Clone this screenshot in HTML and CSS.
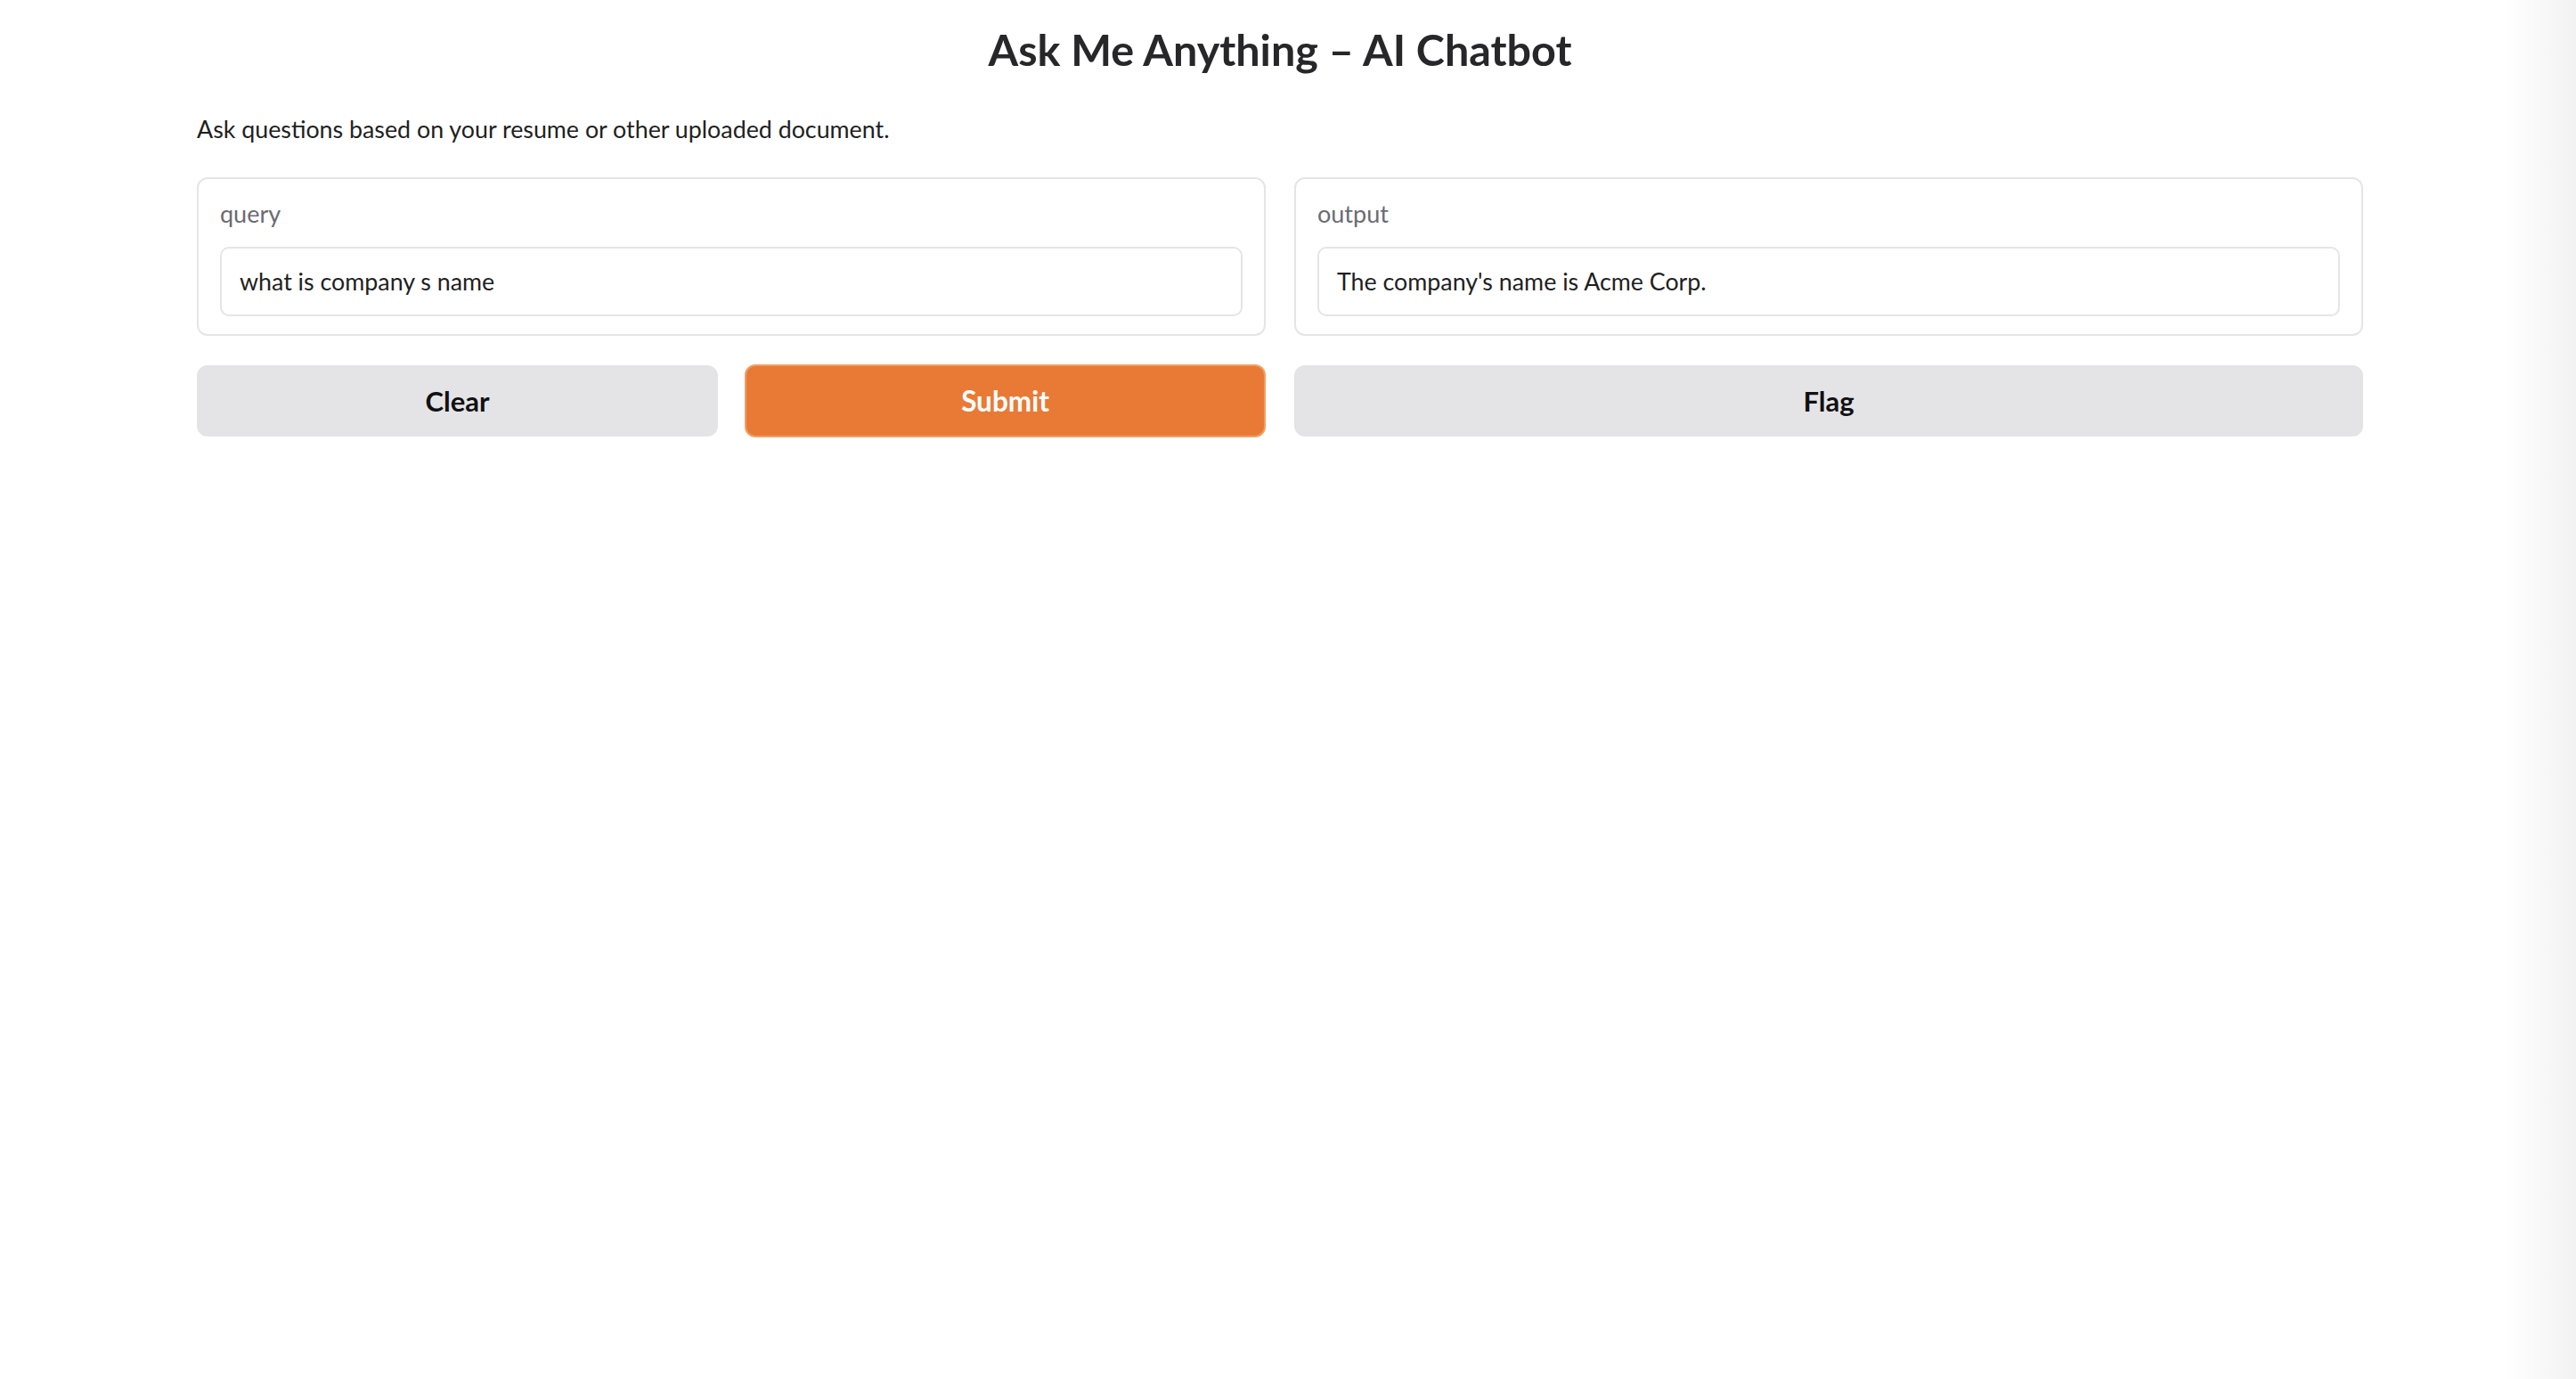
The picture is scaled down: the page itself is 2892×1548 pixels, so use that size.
FILE: index.html
```html
<!DOCTYPE html>
<html lang="en">
<head>
<meta charset="utf-8">
<title>Ask Me Anything – AI Chatbot</title>
<link rel="stylesheet" href="styles.css">
</head>
<body>
<main class="app">
  <h1 class="title">Ask Me Anything – AI Chatbot</h1>
  <p class="desc">Ask questions based on your resume or other uploaded document.</p>
  <div class="row">
    <div class="block">
      <label class="label">query</label>
      <div class="field">what is company s name</div>
    </div>
    <div class="block">
      <label class="label">output</label>
      <div class="field">The company's name is Acme Corp.</div>
    </div>
  </div>
  <div class="row buttons">
    <div class="pair">
      <button class="btn secondary">Clear</button>
      <button class="btn primary">Submit</button>
    </div>
    <button class="btn secondary">Flag</button>
  </div>
</main>
</body>
</html>
```

FILE: styles.css
```css
html {
  background: linear-gradient(to right, #ffffff calc(100% - 80px), #f2f2f2 100%);
  min-height: 100%;
}
body {
  margin: 0;
  font-family: "Lato", "Open Sans", sans-serif;
  color: #1f1f1f;
}
.app {
  width: 2432px;
  margin-left: 221px;
}
.title {
  margin: 0;
  padding-top: 22px;
  height: 66px;
  line-height: 66px;
  text-align: center;
  font-size: 48.5px;
  font-weight: 700;
  color: #27272a;
}
.desc {
  margin: 0;
  padding-top: 39px;
  line-height: 36px;
  height: 36px;
  font-size: 26.8px;
  color: #1f1f1f;
}
.row {
  display: grid;
  grid-template-columns: 1fr 1fr;
  gap: 32px;
}
.row:first-of-type {
  margin-top: 36px;
}
.block {
  border: 2px solid #e5e5e7;
  border-radius: 12px;
  padding: 21px 24px 20px;
  display: flex;
  flex-direction: column;
  gap: 19px;
}
.label {
  line-height: 36px;
  height: 36px;
  font-size: 27px;
  color: #6b6b73;
}
.field {
  height: 74px;
  border: 2px solid #e5e5e7;
  border-radius: 10px;
  padding: 0 20px;
  display: flex;
  align-items: center;
  font-size: 26.8px;
  color: #1f1f1f;
  background: #fff;
}
.buttons {
  margin-top: 32px;
  align-items: center;
}
.pair {
  display: grid;
  grid-template-columns: 1fr 1fr;
  gap: 30px;
  align-items: center;
}
.btn {
  height: 80px;
  border-radius: 12px;
  font-family: "Lato", "Open Sans", sans-serif;
  font-size: 31px;
  font-weight: 700;
  border: 2px solid transparent;
  padding: 0;
}
.secondary {
  background: #e4e4e7;
  border-color: #e4e4e7;
  color: #111;
}
.primary {
  height: 82px;
  background: #e87a36;
  border-color: #f0a064;
  color: #fff;
  font-size: 31.5px;
}
```
